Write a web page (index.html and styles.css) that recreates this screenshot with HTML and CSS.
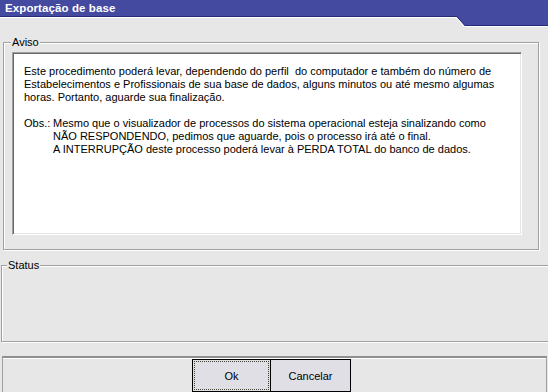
FILE: index.html
```html
<!DOCTYPE html>
<html lang="pt">
<head>
<meta charset="utf-8">
<title>Exportação de base</title>
<link rel="stylesheet" href="styles.css">
</head>
<body>
<div class="window">
  <div class="titlebar">
    <svg class="title-shape" width="548" height="28" viewBox="0 0 548 28" aria-hidden="true">
      <path d="M0 0 H548 V26 H465 L457 17 H0 Z" fill="#434a9f"/>
      <polyline points="0,16.5 456.8,16.5 464.8,25.5 548,25.5" fill="none" stroke="#262a78" stroke-width="1"/>
      <polyline points="0,17.5 456.3,17.5 464.3,26.5 548,26.5" fill="none" stroke="#ffffff" stroke-width="1"/>
      <rect x="545" y="28" width="2" height="1" fill="#434a9f"/>
    </svg>
    <span class="title-text">Exportação de base</span>
  </div>

  <div class="group aviso">
    <span class="group-label">Aviso</span>
    <div class="textbox">
      <p class="para">Este procedimento poderá levar, dependendo do perfil &nbsp;do computador e também do número de<br>Estabelecimentos e Profissionais de sua base de dados, alguns minutos ou até mesmo algumas<br>horas. Portanto, aguarde sua finalização.</p>
      <div class="obs">
        <span class="obs-label">Obs.:</span>
        <p class="obs-text">Mesmo que o visualizador de processos do sistema operacional esteja sinalizando como<br>NÃO RESPONDENDO, pedimos que aguarde, pois o processo irá até o final.<br>A INTERRUPÇÃO deste processo poderá levar à PERDA TOTAL do banco de dados.</p>
      </div>
    </div>
  </div>

  <div class="group status">
    <span class="group-label status-label">Status</span>
  </div>

  <div class="buttonbar">
    <button class="btn btn-ok" type="button"><span class="focus">Ok</span></button>
    <button class="btn btn-cancel" type="button">Cancelar</button>
  </div>
</div>
</body>
</html>
```

FILE: styles.css
```css
* { box-sizing: border-box; }

html, body {
  margin: 0;
  padding: 0;
  background: #e7e7e7;
}

body {
  font-family: "Liberation Sans", Arial, sans-serif;
  font-size: 11px;
  color: #000;
  width: 548px;
  height: 392px;
  overflow: hidden;
}

.window {
  width: 548px;
  height: 392px;
  display: flex;
  flex-direction: column;
}

.titlebar {
  position: relative;
  height: 18px;
  flex: none;
}

.title-shape {
  position: absolute;
  left: 0;
  top: 0;
  display: block;
}

.title-text {
  position: relative;
  display: block;
  padding: 1px 0 0 5px;
  color: #fff;
  font-weight: bold;
  font-size: 11.5px;
  letter-spacing: 0.1px;
  line-height: 14px;
}

.group {
  position: relative;
  border: 1px solid #a0a0a0;
  box-shadow: inset 1px 1px 0 #fff, 1px 1px 0 #fff;
  flex: none;
}

.group-label {
  position: absolute;
  top: -7px;
  left: 7px;
  padding: 0 1px;
  background: #e7e7e7;
  line-height: 13px;
}

.aviso {
  margin: 24px 9px 0 3px;
  height: 208px;
  padding: 9px 16px 14px 8px;
}

.textbox {
  height: 183px;
  background: #fff;
  border: 1px solid;
  border-color: #a0a0a0 #fff #fff #a0a0a0;
  box-shadow: inset 1px 1px 0 #696969, inset -1px -1px 0 #e3e3e3;
  padding: 12px 0 0 11px;
  line-height: 13px;
  white-space: nowrap;
}

.para {
  margin: 0 0 13px 0;
}

.obs {
  display: flex;
}

.obs-label {
  width: 29px;
  flex: none;
}

.obs-text {
  margin: 0;
}

.status {
  margin: 15px -3px 0 1px;
  height: 77px;
}

.status-label {
  left: 5px;
}

.buttonbar {
  margin: 14px 1px 0 2px;
  flex: 1;
  border-top: 2px solid #8f8f8f;
  border-left: 1px solid #a0a0a0;
  border-right: 1px solid #a0a0a0;
  box-shadow: inset 0 1px 0 #fff;
  padding: 1px 0 0 189px;
  display: flex;
  align-items: flex-start;
}

.btn {
  font-family: "Liberation Sans", Arial, sans-serif;
  font-size: 11px;
  color: #000;
  background: #dfdfe5;
  border: 1px solid #000;
  height: 33px;
  padding: 0;
  margin: 0;
  border-radius: 0;
  display: flex;
  align-items: center;
  justify-content: center;
}

.btn-ok {
  width: 79px;
  padding: 1px;
}

.focus {
  flex: 1;
  align-self: stretch;
  display: flex;
  align-items: center;
  justify-content: center;
  border: 1px dotted #404030;
}

.btn-cancel {
  width: 81px;
  margin-left: -1px;
}
```
